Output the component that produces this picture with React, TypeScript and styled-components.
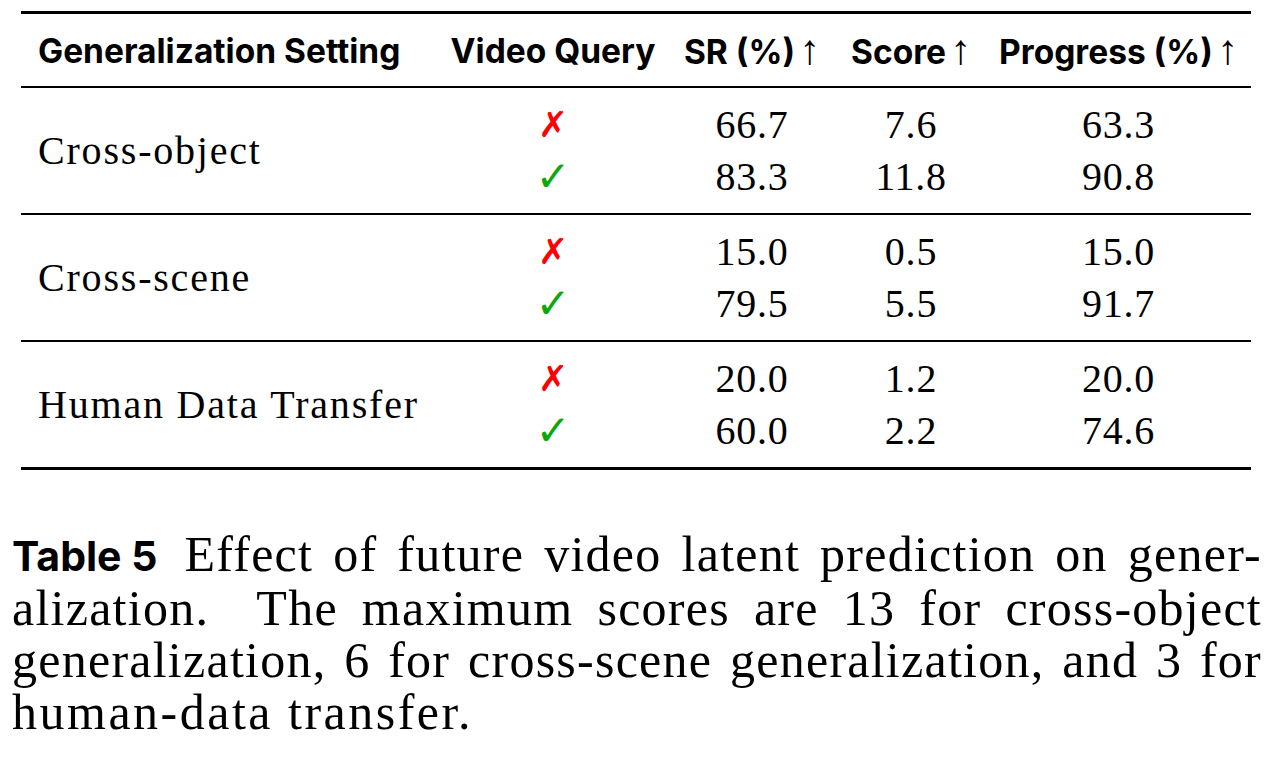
import React from "react";
import styled, { createGlobalStyle } from "styled-components";

const GlobalStyle = createGlobalStyle`
  html, body {
    margin: 0;
    padding: 0;
    background: #ffffff;
  }
  body {
    width: 1272px;
    height: 770px;
    overflow: hidden;
  }
`;

const COLS = "417px 230px 168px 150px 265px";

const Page = styled.div`
  padding-top: 11px;
  display: flex;
  flex-direction: column;
`;

const Table = styled.div`
  width: 1230px;
  margin-left: 21px;
  border-top: 3px solid #000;
  border-bottom: 3px solid #000;
`;

const HeaderRow = styled.div`
  display: grid;
  grid-template-columns: ${COLS};
  height: 72px;
  align-items: center;
  border-bottom: 2px solid #000;
`;

const HeaderCell = styled.div<{ $left?: boolean }>`
  font-family: Inter, "Liberation Sans", sans-serif;
  font-weight: 700;
  font-size: 33.5px;
  letter-spacing: 0;
  line-height: 72px;
  color: #000;
  white-space: nowrap;
  text-align: ${(p) => (p.$left ? "left" : "center")};
  padding-left: ${(p) => (p.$left ? "17px" : "0")};
`;

const Arrow = styled.span`
  font-family: "Liberation Serif", "DejaVu Serif", serif;
  font-weight: 400;
  font-size: 42px;
  margin-left: 4px;
`;

const Group = styled.div<{ $last?: boolean }>`
  display: grid;
  grid-template-columns: ${COLS};
  grid-template-rows: 52px 52px;
  padding: 11px 0 10px;
  border-bottom: ${(p) => (p.$last ? "none" : "2px solid #000")};
`;

const Label = styled.div`
  grid-row: 1 / span 2;
  grid-column: 1;
  align-self: center;
  padding-left: 17px;
  font-family: "Liberation Serif", serif;
  font-size: 40px;
  letter-spacing: 0.045em;
  line-height: 52px;
  color: #000;
  white-space: nowrap;
`;

const Cell = styled.div`
  font-family: "Liberation Serif", serif;
  font-size: 40px;
  line-height: 52px;
  text-align: center;
  color: #000;
  letter-spacing: 0.02em;
`;

const Mark = styled.div<{ $ok: boolean }>`
  font-family: "DejaVu Sans", sans-serif;
  font-size: ${(p) => (p.$ok ? "42px" : "36px")};
  line-height: 52px;
  text-align: center;
  color: ${(p) => (p.$ok ? "#0aa80a" : "#ff0000")};
  grid-column: 2;
`;

const Caption = styled.div`
  margin: 58px 10px 0 12px;
  display: flex;
  flex-direction: column;
`;

const CaptionLine = styled.div<{ $justify?: boolean }>`
  font-family: "Liberation Serif", serif;
  font-size: 50px;
  letter-spacing: ${(p) => (p.$justify ? "0.025em" : "0.05em")};
  line-height: 52px;
  color: #000;
  white-space: nowrap;
  text-align: ${(p) => (p.$justify ? "justify" : "left")};
  text-align-last: ${(p) => (p.$justify ? "justify" : "left")};
`;

const CaptionTag = styled.span`
  display: inline-block;
  font-family: Inter, "Liberation Sans", sans-serif;
  font-weight: 700;
  font-size: 41px;
  letter-spacing: 0;
  margin-right: 27px;
`;

type Pair = { sr: string; score: string; progress: string };
type GroupData = { label: string; without: Pair; withQ: Pair };

const groups: GroupData[] = [
  {
    label: "Cross-object",
    without: { sr: "66.7", score: "7.6", progress: "63.3" },
    withQ: { sr: "83.3", score: "11.8", progress: "90.8" },
  },
  {
    label: "Cross-scene",
    without: { sr: "15.0", score: "0.5", progress: "15.0" },
    withQ: { sr: "79.5", score: "5.5", progress: "91.7" },
  },
  {
    label: "Human Data Transfer",
    without: { sr: "20.0", score: "1.2", progress: "20.0" },
    withQ: { sr: "60.0", score: "2.2", progress: "74.6" },
  },
];

export default function App() {
  return (
    <Page>
      <GlobalStyle />
      <Table>
        <HeaderRow>
          <HeaderCell $left>Generalization Setting</HeaderCell>
          <HeaderCell>Video Query</HeaderCell>
          <HeaderCell>
            SR (%)<Arrow>↑</Arrow>
          </HeaderCell>
          <HeaderCell>
            Score<Arrow>↑</Arrow>
          </HeaderCell>
          <HeaderCell>
            Progress (%)<Arrow>↑</Arrow>
          </HeaderCell>
        </HeaderRow>
        {groups.map((g, i) => (
          <Group key={g.label} $last={i === groups.length - 1}>
            <Label>{g.label}</Label>
            <Mark $ok={false}>✗</Mark>
            <Cell>{g.without.sr}</Cell>
            <Cell>{g.without.score}</Cell>
            <Cell>{g.without.progress}</Cell>
            <Mark $ok>✓</Mark>
            <Cell>{g.withQ.sr}</Cell>
            <Cell>{g.withQ.score}</Cell>
            <Cell>{g.withQ.progress}</Cell>
          </Group>
        ))}
      </Table>
      <Caption>
        <CaptionLine $justify>
          <CaptionTag>Table 5</CaptionTag>Effect of future video latent prediction on gener-
        </CaptionLine>
        <CaptionLine $justify>
          alization.&nbsp; The maximum scores are 13 for cross-object
        </CaptionLine>
        <CaptionLine $justify>
          generalization, 6 for cross-scene generalization, and 3 for
        </CaptionLine>
        <CaptionLine>human-data transfer.</CaptionLine>
      </Caption>
    </Page>
  );
}
